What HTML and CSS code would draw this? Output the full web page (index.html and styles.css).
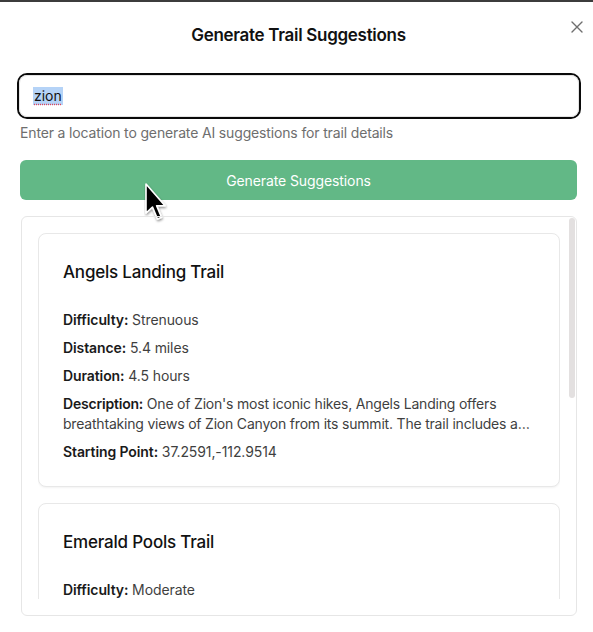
FILE: index.html
```html
<!DOCTYPE html>
<html lang="en">
<head>
<meta charset="utf-8">
<title>Generate Trail Suggestions</title>
<link rel="stylesheet" href="styles.css">
</head>
<body>
<div class="dialog">
  <button class="close" aria-label="Close">
    <svg width="12" height="12" viewBox="0 0 12 12"><path d="M1 1 L11 11 M11 1 L1 11" stroke="#6f6f6f" stroke-width="1.4" stroke-linecap="round" fill="none"/></svg>
  </button>
  <h2 class="title">Generate Trail Suggestions</h2>
  <div class="field">
    <div class="input"><span class="sel">zion</span></div>
    <p class="help">Enter a location to generate AI suggestions for trail details</p>
  </div>
  <div class="btn-wrap">
    <button class="generate">Generate Suggestions</button>
    <svg class="cursor" width="24" height="42" viewBox="0 0 24 42">
      <defs><filter id="sh" x="-30%" y="-30%" width="160%" height="160%"><feDropShadow dx="0.5" dy="1.5" stdDeviation="1.2" flood-color="#000" flood-opacity="0.45"/></filter></defs>
      <path d="M2 2 L2 31 L8.5 25 L13.5 37 L17.5 35.3 L12.6 23.8 L21 23.8 Z" fill="#000" stroke="#fff" stroke-width="1.6" stroke-linejoin="round" filter="url(#sh)"/>
    </svg>
  </div>
  <div class="results">
    <div class="scrollbar"></div>
    <div class="viewport">
      <div class="card">
        <h3 class="card-title">Angels Landing Trail</h3>
        <div class="card-body">
          <p><b>Difficulty:</b> Strenuous</p>
          <p><b>Distance:</b> 5.4 miles</p>
          <p><b>Duration:</b> 4.5 hours</p>
          <p class="desc"><b>Description:</b> One of Zion's most iconic hikes, Angels Landing offers breathtaking views of Zion Canyon from its summit. The trail includes a steep section with chains bolted into the rock.</p>
          <p><b>Starting Point:</b> 37.2591,-112.9514</p>
        </div>
      </div>
      <div class="card">
        <h3 class="card-title">Emerald Pools Trail</h3>
        <div class="card-body">
          <p><b>Difficulty:</b> Moderate</p>
          <p><b>Distance:</b> 3 miles</p>
          <p><b>Duration:</b> 2 hours</p>
          <p class="desc"><b>Description:</b> A family-friendly hike leading to a series of pools and waterfalls, surrounded by lush vegetation and towering sandstone cliffs.</p>
          <p><b>Starting Point:</b> 37.2509,-112.9577</p>
        </div>
      </div>
    </div>
  </div>
</div>
</body>
</html>
```

FILE: styles.css
```css
* { box-sizing: border-box; }
html, body { margin: 0; padding: 0; background: #fff; }
body {
  font-family: Inter, "Noto Sans", "Liberation Sans", sans-serif;
  color: #1a1a1a;
  -webkit-font-smoothing: antialiased;
}
.dialog {
  position: relative;
  width: 593px;
  height: 632px;
  border-top: 2px solid #3c3c3c;
  padding: 19px 16px 16px 20px;
  display: flex;
  flex-direction: column;
  overflow: hidden;
}
.close {
  position: absolute;
  top: 19px;
  right: 10px;
  width: 12px;
  height: 12px;
  padding: 0;
  border: 0;
  background: none;
  display: flex;
}
.title {
  margin: 0;
  text-align: center;
  font-size: 17px;
  line-height: 28px;
  font-weight: 600;
  letter-spacing: -0.3px;
  color: #111;
}
.field { margin-top: 26px; }
.input {
  height: 42px;
  margin: 0 -2px 0 -1px;
  border: 1px solid #e3e3e3;
  border-radius: 8px;
  box-shadow: 0 0 0 2px #0a0a0a;
  padding: 0 14px;
  display: flex;
  align-items: center;
  font-size: 14px;
  color: #111;
}
.sel {
  background: #b5d3f7;
  text-decoration: underline dotted #e0455a;
  text-underline-offset: 3px;
  line-height: 18px;
  padding: 0 1px;
  margin-left: -1px;
}
.help {
  margin: 7px 0 0;
  font-size: 14px;
  line-height: 18px;
  color: #6e6e6e;
  letter-spacing: -0.15px;
}
.btn-wrap { position: relative; margin-top: 18px; }
.generate {
  display: block;
  width: 100%;
  height: 40px;
  border: 0;
  border-radius: 6px;
  background: #62b886;
  color: #fff;
  font-family: inherit;
  font-size: 14px;
  letter-spacing: -0.1px;
}
.cursor {
  position: absolute;
  left: 124px;
  top: 22px;
}
.results {
  position: relative;
  margin: 16px 0 0 1px;
  height: 400px;
  border: 1px solid #e6e6e6;
  border-radius: 6px;
  padding: 16px;
}
.scrollbar {
  position: absolute;
  top: 1px;
  right: 1px;
  width: 6px;
  height: 180px;
  border-radius: 3px;
  background: #e3e0e0;
}
.viewport {
  height: 100%;
  overflow: hidden;
  display: flex;
  flex-direction: column;
  gap: 16px;
}
.card {
  flex: none;
  border: 1px solid #e8e8e8;
  border-radius: 8px;
  box-shadow: 0 1px 2px rgba(0,0,0,0.05);
  background: #fff;
}
.card-title {
  margin: 0;
  padding: 24px;
  font-size: 17px;
  line-height: 28px;
  font-weight: 500;
  letter-spacing: -0.2px;
  color: #111;
}
.card-body {
  padding: 0 24px 24px;
  display: flex;
  flex-direction: column;
  gap: 8px;
}
.card-body p {
  margin: 0;
  font-size: 14px;
  line-height: 20px;
  color: #3f3f3f;
  letter-spacing: -0.1px;
}
.card-body b { font-weight: 600; color: #1a1a1a; }
.card-body .desc {
  letter-spacing: -0.2px;
  display: -webkit-box;
  -webkit-box-orient: vertical;
  -webkit-line-clamp: 2;
  overflow: hidden;
}
```
